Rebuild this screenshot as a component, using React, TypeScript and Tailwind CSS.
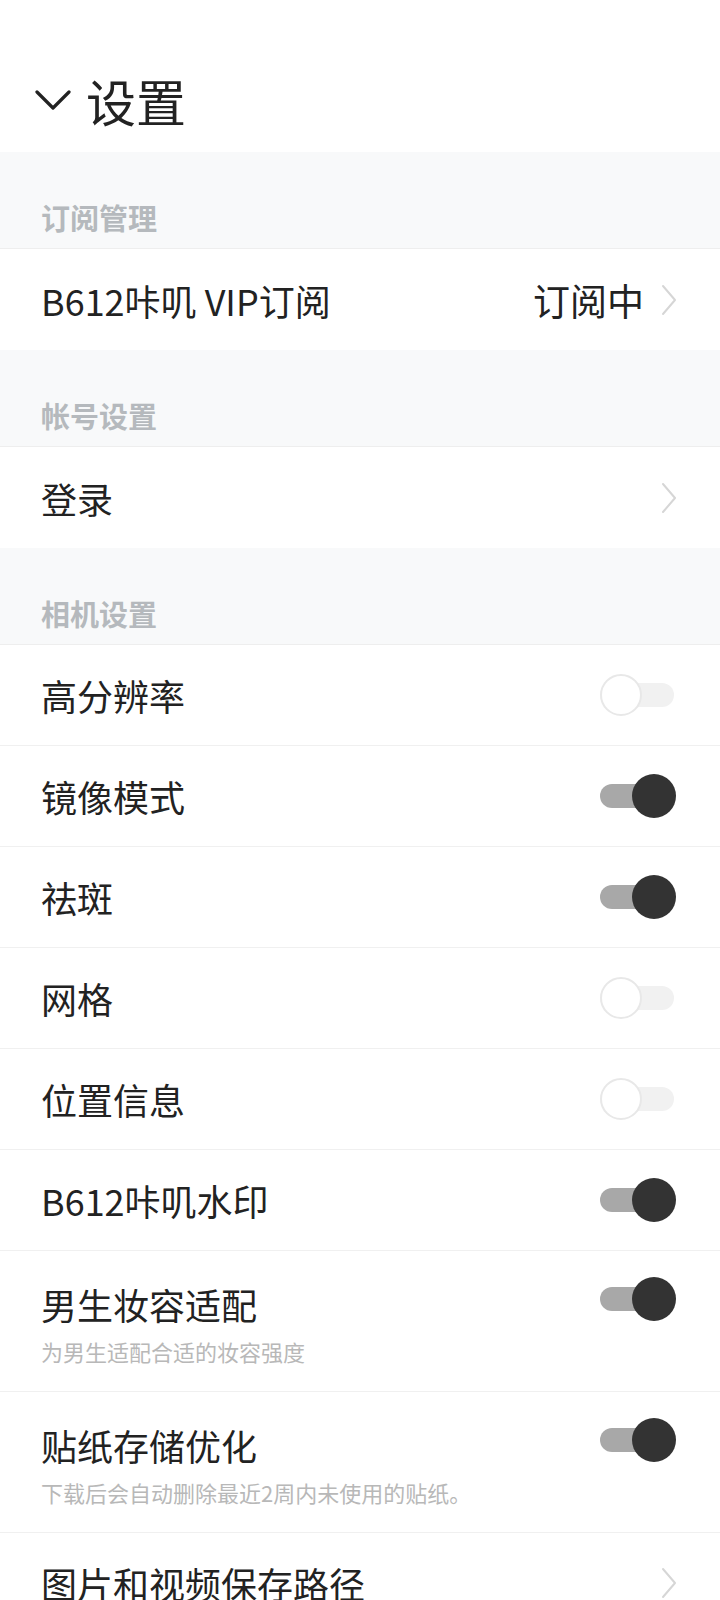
import React from "react";

const font = { fontFamily: '"Noto Sans CJK SC", "Noto Sans", sans-serif' };

function Chevron() {
  return (
    <svg width="18" height="34" viewBox="0 0 18 34" className="shrink-0">
      <path d="M3 3 L15 17 L3 31" fill="none" stroke="#d6d6d6" strokeWidth="2" strokeLinecap="round" strokeLinejoin="round" />
    </svg>
  );
}

function Toggle({ on }: { on: boolean }) {
  return (
    <div className="relative w-[76px] h-[46px] shrink-0">
      <div
        className={`absolute left-0 top-[11px] w-[74px] h-[24px] rounded-full ${on ? "bg-[#a8a8a8]" : "bg-[#f1f1f1]"}`}
      />
      {on ? (
        <div className="absolute right-0 top-[1px] w-[44px] h-[44px] rounded-full bg-[#333333]" />
      ) : (
        <div className="absolute left-0 top-[2px] w-[42px] h-[42px] rounded-full bg-white border-2 border-[#e8e8e8]" />
      )}
    </div>
  );
}

function SectionHeader({ title }: { title: string }) {
  return (
    <div className="h-[97px] bg-[#f8f9fa] border-b border-[#eeeeee] flex items-end px-[41px] pb-[9px]">
      <span className="text-[29px] font-bold text-[#b5b9bd] leading-[44px]">{title}</span>
    </div>
  );
}

function Row({
  title,
  sub,
  right,
  last,
}: {
  title: string;
  sub?: string;
  right: React.ReactNode;
  last?: boolean;
}) {
  if (sub) {
    return (
      <div className={`h-[141px] flex items-start pl-[41px] pr-[44px] ${last ? "" : "border-b border-[#f0f0f0]"}`}>
        <div className="flex-1 pt-[30px]">
          <div className="text-[36px] leading-[46px] text-[#222222]">{title}</div>
          <div className="text-[22px] leading-[30px] mt-[9px] text-[#b8b8b8]">{sub}</div>
        </div>
        <div className="pt-[25px]">{right}</div>
      </div>
    );
  }
  return (
    <div className={`h-[101px] flex items-center pl-[41px] pr-[44px] ${last ? "" : "border-b border-[#f0f0f0]"}`}>
      <div className="flex-1 text-[36px] leading-[46px] text-[#222222]">{title}</div>
      {right}
    </div>
  );
}

export default function App() {
  return (
    <div className="w-[720px] h-[1600px] bg-white overflow-hidden" style={font}>
      {/* Header */}
      <div className="h-[152px] flex items-center pl-[35px] pt-[48px]">
        <svg width="36" height="22" viewBox="0 0 36 22" className="mr-[15px]">
          <path d="M2 3 L18 19 L34 3" fill="none" stroke="#222222" strokeWidth="3.2" strokeLinecap="round" strokeLinejoin="round" />
        </svg>
        <span className="text-[50px] leading-[60px] text-[#222222] font-normal">设置</span>
      </div>

      <SectionHeader title="订阅管理" />
      <Row
        title="B612咔叽 VIP订阅"
        last
        right={
          <div className="flex items-center gap-[16px] mr-[-2px]">
            <span className="text-[37px] leading-[46px] text-[#222222]">订阅中</span>
            <Chevron />
          </div>
        }
      />

      <SectionHeader title="帐号设置" />
      <Row title="登录" last right={<div className="mr-[-2px]"><Chevron /></div>} />

      <SectionHeader title="相机设置" />
      <Row title="高分辨率" right={<Toggle on={false} />} />
      <Row title="镜像模式" right={<Toggle on />} />
      <Row title="祛斑" right={<Toggle on />} />
      <Row title="网格" right={<Toggle on={false} />} />
      <Row title="位置信息" right={<Toggle on={false} />} />
      <Row title="B612咔叽水印" right={<Toggle on />} />
      <Row title="男生妆容适配" sub="为男生适配合适的妆容强度" right={<Toggle on />} />
      <Row title="贴纸存储优化" sub="下载后会自动删除最近2周内未使用的贴纸。" right={<Toggle on />} />
      <Row title="图片和视频保存路径" right={<div className="mr-[-2px]"><Chevron /></div>} />
    </div>
  );
}
